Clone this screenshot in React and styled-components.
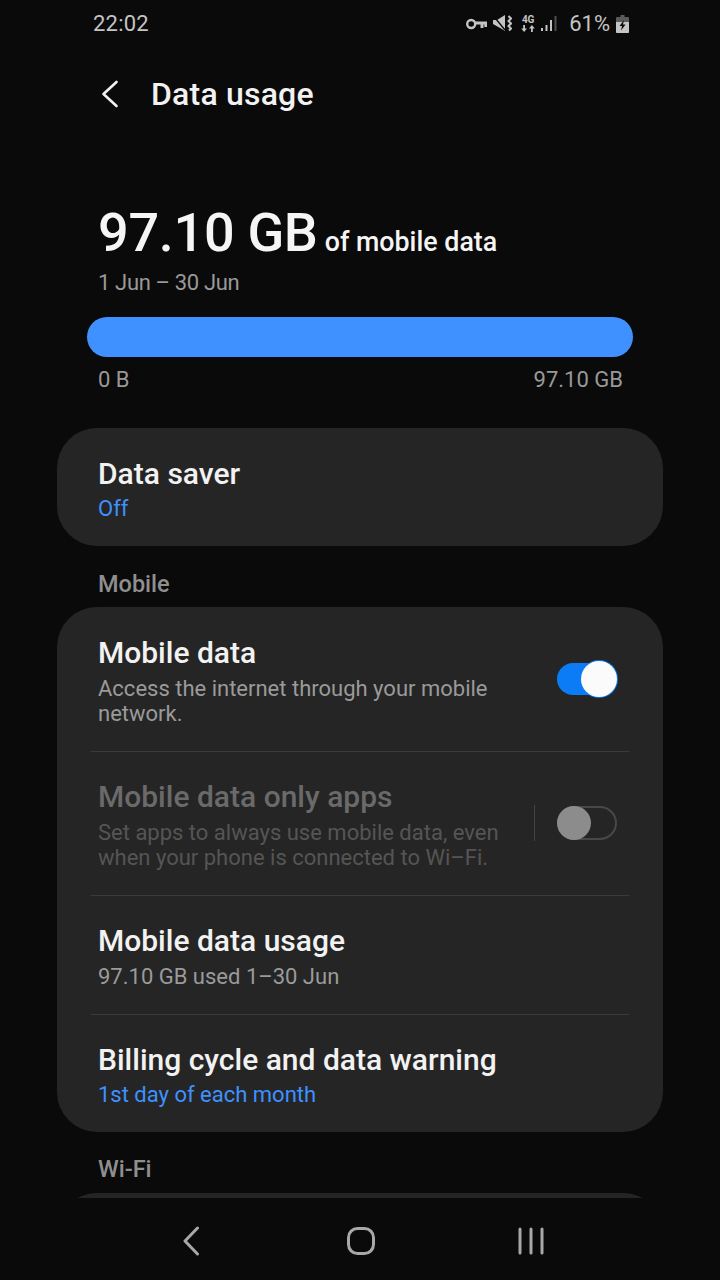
import React from 'react'
import styled, { createGlobalStyle } from 'styled-components'

const GlobalStyle = createGlobalStyle`
  html, body {
    margin: 0;
    padding: 0;
    background: #0a0a0a;
  }
  * { box-sizing: border-box; }
`

function StatusIcons() {
  return (
    <StatusRight>
      <svg width="21" height="12" viewBox="0 0 21 12" fill="none" stroke="#c4c4c4" strokeWidth="2.400">
        <circle cx="5.200" cy="6" r="4" />
        <path d="M9 5h12M16 5v5M19.800 5v4" strokeWidth="3" />
      </svg>
      <MuteIcon width="19" height="17" viewBox="0 0 19 17">
        <path d="M0 5h4l8-5v16l-4-2.500L0 9z" fill="#c4c4c4" />
        <path d="M0 .5 12 15" stroke="#0a0a0a" strokeWidth="1.400" />
        <path d="M15.500 1l2.500 2.500-2.500 2.500 2.500 2.500-2.500 2.500 2.500 2.500-2 2" fill="none" stroke="#c4c4c4" strokeWidth="2" />
      </MuteIcon>
      <NetBox>
        <NetText>4G</NetText>
        <svg width="14" height="7" viewBox="0 0 14 7" fill="#c4c4c4">
          <path d="M2.200 0h1.800v3.600h2L3.100 7 .2 3.600h2zM10 7h1.800V3.400h2L10.900 0 8 3.400h2z" />
        </svg>
      </NetBox>
      <SignalIcon width="16" height="17" viewBox="0 0 16 17" fill="#c4c4c4">
        <rect x="0" y="13" width="2" height="3" />
        <rect x="4.500" y="10" width="2" height="6" />
        <rect x="9" y="5" width="2" height="11" />
        <rect x="13.500" y="1" width="2" height="15" fill="#4e4e4e" />
      </SignalIcon>
      <BatteryText>61%</BatteryText>
      <svg width="13" height="18" viewBox="0 0 13 18">
        <path d="M4.500 0h4v2H12a1 1 0 0 1 1 1v14a1 1 0 0 1-1 1H1a1 1 0 0 1-1-1V3a1 1 0 0 1 1-1h3.500z" fill="#5a5a5a" />
        <path d="M0 7h13v10a1 1 0 0 1-1 1H1a1 1 0 0 1-1-1z" fill="#c4c4c4" />
        <path d="M8 5 3.500 11H6l-1 4.500 4.500-6H7z" fill="#0a0a0a" />
      </svg>
    </StatusRight>
  )
}

function Switch({ on }) {
  return on ? (
    <SwitchOn><KnobOn /></SwitchOn>
  ) : (
    <SwitchOff><KnobOff /></SwitchOff>
  )
}

function App() {
  return (
    <Screen>
      <GlobalStyle />
      <StatusBar>
        <Clock>22:02</Clock>
        <StatusIcons />
      </StatusBar>

      <Header>
        <svg width="18" height="28" viewBox="0 0 18 28" fill="none" stroke="#f0f0f0" strokeWidth="2.600" strokeLinecap="round" strokeLinejoin="round">
          <path d="M15.500 2 2.500 14l13 12" />
        </svg>
        <Title>Data usage</Title>
      </Header>

      <Scroll>
        <Summary>
          <Amount>
            <Big>97.10 GB</Big>
            <Of>of mobile data</Of>
          </Amount>
          <Range>1 Jun – 30 Jun</Range>
        </Summary>

        <Bar />
        <BarLabels>
          <span>0 B</span>
          <span>97.10 GB</span>
        </BarLabels>

        <Card>
          <Row height={118}>
            <RowText>
              <RowTitle>Data saver</RowTitle>
              <RowValue>Off</RowValue>
            </RowText>
          </Row>
        </Card>

        <SectionLabel top={23}>Mobile</SectionLabel>

        <Card>
          <Row height={144}>
            <RowText>
              <RowTitle>Mobile data</RowTitle>
              <RowSub>Access the internet through your mobile network.</RowSub>
            </RowText>
            <Switch on />
          </Row>
          <Divider />
          <Row height={143}>
            <RowText>
              <RowTitle disabled>Mobile data only apps</RowTitle>
              <RowSub disabled>Set apps to always use mobile data, even when your phone is connected to Wi–Fi.</RowSub>
            </RowText>
            <VLine />
            <Switch />
          </Row>
          <Divider />
          <Row height={118}>
            <RowText>
              <RowTitle>Mobile data usage</RowTitle>
              <RowSub>97.10 GB used 1–30 Jun</RowSub>
            </RowText>
          </Row>
          <Divider />
          <Row height={117}>
            <RowText>
              <RowTitle>Billing cycle and data warning</RowTitle>
              <RowValue>1st day of each month</RowValue>
            </RowText>
          </Row>
        </Card>

        <SectionLabel top={22}>Wi-Fi</SectionLabel>
        <Card>
          <Row height={118} />
        </Card>
      </Scroll>

      <NavBar>
        <svg width="23" height="30" viewBox="0 0 23 30" fill="none" stroke="#a8a8a8" strokeWidth="3" strokeLinecap="round" strokeLinejoin="round">
          <path d="M15.500 2 3 15l12.500 13" />
        </svg>
        <svg width="30" height="30" viewBox="0 0 30 30" fill="none" stroke="#a8a8a8" strokeWidth="3">
          <rect x="2.500" y="2.500" width="25" height="25" rx="9" />
        </svg>
        <svg width="28" height="28" viewBox="0 0 28 28" stroke="#a8a8a8" strokeWidth="3" strokeLinecap="round">
          <path d="M3 2v24M14 2v24M25 2v24" />
        </svg>
      </NavBar>
    </Screen>
  )
}

const Screen = styled.div`
  width: 720px;
  height: 1280px;
  background: #0a0a0a;
  display: flex;
  flex-direction: column;
  overflow: hidden;
  font-family: Roboto, "Liberation Sans", sans-serif;
`

const StatusBar = styled.div`
  height: 47px;
  padding: 0 91px 0 93px;
  display: flex;
  align-items: center;
  justify-content: space-between;
  flex: none;
`

const Clock = styled.span`
  font-size: 22px;
  letter-spacing: 0.2px;
  color: #c4c4c4;
`

const StatusRight = styled.div`
  display: flex;
  align-items: center;
  gap: 6px;
`

const MuteIcon = styled.svg`
  margin-right: 3px;
`

const SignalIcon = styled.svg`
  margin-right: 7px;
`

const NetBox = styled.div`
  display: flex;
  flex-direction: column;
  align-items: center;
  width: 14px;
`

const NetText = styled.span`
  font-size: 10px;
  line-height: 10px;
  font-weight: 700;
  color: #c4c4c4;
`

const BatteryText = styled.span`
  font-size: 22px;
  color: #c4c4c4;
  margin-left: -1px;
`

const Header = styled.div`
  height: 94px;
  padding-left: 101px;
  display: flex;
  align-items: center;
  gap: 32px;
  flex: none;
`

const Title = styled.h1`
  margin: 0;
  font-size: 32px;
  letter-spacing: 0.2px;
  font-weight: 500;
  color: #f2f2f2;
`

const Scroll = styled.div`
  flex: 1;
  min-height: 0;
  overflow: hidden;
  padding: 0 57px;
`

const Summary = styled.div`
  padding: 57px 0 0 41px;
`

const Amount = styled.div`
  display: flex;
  align-items: baseline;
  gap: 7px;
  color: #f5f5f5;
`

const Big = styled.span`
  font-size: 54px;
  line-height: 70px;
  letter-spacing: -0.3px;
  font-weight: 500;
`

const Of = styled.span`
  font-size: 26.800px;
  font-weight: 500;
`

const Range = styled.div`
  font-size: 22px;
  line-height: 30px;
  letter-spacing: -0.35px;
  color: #999999;
`

const Bar = styled.div`
  height: 40px;
  margin: 19px 30px 0;
  background: #3e91ff;
  border-radius: 20px;
`

const BarLabels = styled.div`
  display: flex;
  justify-content: space-between;
  padding: 8px 40px 0 41px;
  height: 71px;
  font-size: 22px;
  line-height: 30px;
  color: #999999;
`

const Card = styled.div`
  background: #252525;
  border-radius: 40px;
`

const Row = styled.div`
  height: ${p => p.height}px;
  padding: 0 46px 0 41px;
  display: flex;
  align-items: center;
`

const RowText = styled.div`
  flex: 1;
  min-width: 0;
  padding: 2px 30px 0 0;
`

const RowTitle = styled.div`
  font-size: 30px;
  line-height: 36px;
  font-weight: 500;
  color: ${p => (p.disabled ? '#6a6a6a' : '#f2f2f2')};
`

const RowSub = styled.div`
  font-size: 22px;
  line-height: 25px;
  margin-top: 5px;
  color: ${p => (p.disabled ? '#555555' : '#9a9a9a')};
`

const RowValue = styled.div`
  font-size: 22px;
  line-height: 25px;
  margin-top: 4px;
  color: #3e91ff;
`

const Divider = styled.div`
  height: 1px;
  margin: 0 34px;
  background: #3a3a3a;
`

const VLine = styled.div`
  width: 1px;
  height: 36px;
  margin: 0 22px 2px 0;
  background: #444444;
`

const SwitchOn = styled.div`
  position: relative;
  width: 60px;
  height: 32px;
  border-radius: 16px;
  background: #0b7cf5;
`

const KnobOn = styled.div`
  position: absolute;
  right: 0;
  top: -2px;
  width: 36px;
  height: 36px;
  border-radius: 50%;
  background: #fbfbfb;
  box-shadow: 0 0 0 1px #0b7cf5;
`

const SwitchOff = styled.div`
  position: relative;
  width: 60px;
  height: 34px;
  margin-bottom: 2px;
  border-radius: 17px;
  border: 2px solid #484848;
`

const KnobOff = styled.div`
  position: absolute;
  left: -2px;
  top: -2px;
  width: 34px;
  height: 34px;
  border-radius: 50%;
  background: #8c8c8c;
`

const SectionLabel = styled.div`
  height: 61px;
  padding: ${p => p.top}px 0 0 41px;
  font-size: 23.500px;
  line-height: 30px;
  font-weight: 500;
  color: #8f8f8f;
`

const NavBar = styled.div`
  height: 82px;
  flex: none;
  background: #0a0a0a;
  padding: 4px 175px 0 182px;
  display: flex;
  align-items: center;
  justify-content: space-between;
`

export default App
